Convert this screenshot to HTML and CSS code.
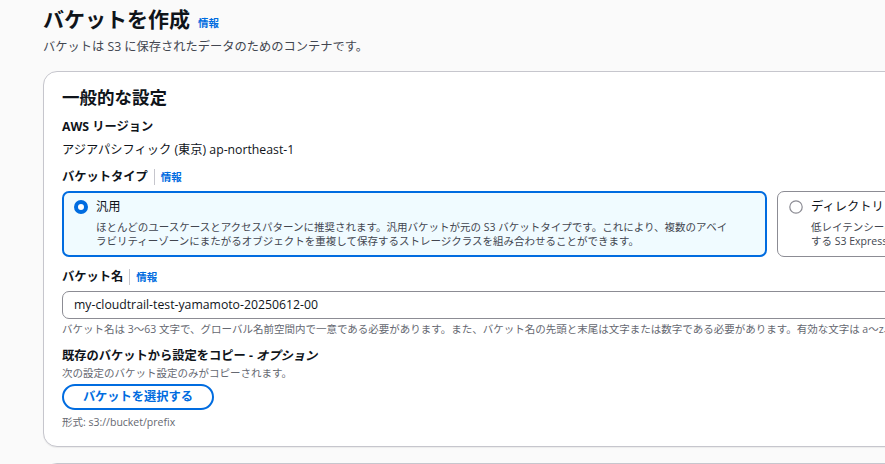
FILE: index.html
```html
<!DOCTYPE html>
<html lang="ja">
<head>
<meta charset="utf-8">
<title>バケットを作成</title>
<link rel="stylesheet" href="styles.css">
</head>
<body>
<div class="page">
  <div class="page-header">
    <h1 class="title">バケットを作成</h1>
    <a class="info-link title-info">情報</a>
  </div>
  <p class="page-desc">バケットは S3 に保存されたデータのためのコンテナです。</p>

  <section class="container">
    <h2 class="container-title">一般的な設定</h2>

    <div class="field field-first">
      <div class="label">AWS リージョン</div>
      <div class="value">アジアパシフィック (東京) ap-northeast-1</div>
    </div>

    <div class="field">
      <div class="label-row">
        <span class="label">バケットタイプ</span>
        <span class="divider"></span>
        <a class="info-link">情報</a>
      </div>
      <div class="tiles">
        <div class="tile tile-selected">
          <div class="tile-head">
            <svg class="radio" width="14" height="14" viewBox="0 0 14 14"><circle cx="7" cy="7" r="5" fill="#ffffff" stroke="#006ce0" stroke-width="4"/></svg>
            <span class="tile-title">汎用</span>
          </div>
          <div class="tile-desc">ほとんどのユースケースとアクセスパターンに推奨されます。汎用バケットが元の S3 バケットタイプです。これにより、複数のアベイ<br>ラビリティーゾーンにまたがるオブジェクトを重複して保存するストレージクラスを組み合わせることができます。</div>
        </div>
        <div class="tile">
          <div class="tile-head">
            <svg class="radio" width="14" height="14" viewBox="0 0 14 14"><circle cx="7" cy="7" r="6.2" fill="#ffffff" stroke="#8c8c94" stroke-width="1.2"/></svg>
            <span class="tile-title">ディレクトリ</span>
          </div>
          <div class="tile-desc">低レイテンシーのユースケースに推奨されます。これらのバケットは、単一のアベイラビリティーゾーン内でより高速なデータ処理を提供<br>する S3 Express One Zone ストレージクラスのみを使用します。</div>
        </div>
      </div>
    </div>

    <div class="field field-name">
      <div class="label-row">
        <span class="label">バケット名</span>
        <span class="divider"></span>
        <a class="info-link">情報</a>
      </div>
      <div class="input">my-cloudtrail-test-yamamoto-20250612-00</div>
      <div class="hint">バケット名は 3～63 文字で、グローバル名前空間内で一意である必要があります。また、バケット名の先頭と末尾は文字または数字である必要があります。有効な文字は a～z、0～9、ピリオド (.)、ハイフン (-) です。</div>
    </div>

    <div class="field field-copy">
      <div class="label">既存のバケットから設定をコピー - <em class="optional">オプション</em></div>
      <div class="hint hint-desc">次の設定のバケット設定のみがコピーされます。</div>
      <button class="btn">バケットを選択する</button>
      <div class="hint hint-format">形式: s3://bucket/prefix</div>
    </div>
  </section>

  <section class="container container-next">
    <h2 class="container-title">オブジェクト所有者</h2>
  </section>
</div>
</body>
</html>
```

FILE: styles.css
```css
html, body {
  margin: 0;
  padding: 0;
  overflow: hidden;
  background: #fafafa;
}

body {
  font-family: "Open Sans", "Noto Sans CJK JP", sans-serif;
  color: #0f141a;
  font-size: 12.25px;
  line-height: 17.5px;
}

.page {
  padding: 6px 0 0 43px;
  width: 1500px;
}

.page-header {
  display: flex;
  align-items: baseline;
  gap: 8px;
}

.title {
  margin: 0;
  font-size: 21px;
  line-height: 26px;
  font-weight: 700;
  color: #0f141a;
}

.info-link {
  color: #006ce0;
  font-size: 10.5px;
  line-height: 14px;
  font-weight: 700;
  text-decoration: none;
}

.page-desc {
  margin: 6px 0 0;
  color: #424650;
  font-size: 12.25px;
  line-height: 17.5px;
}

.container {
  margin-top: 15px;
  background: #ffffff;
  border: 1px solid #c6c6cd;
  border-radius: 14px;
  padding: 14px 18px 17px;
  width: 1420px;
  box-shadow: 0 1px 1px rgba(0, 0, 0, 0.06);
}

.container-next {
  margin-top: 16px;
}

.container-title {
  margin: 0;
  font-size: 17.5px;
  line-height: 22px;
  font-weight: 700;
}

.field-first {
  margin-top: 10px;
}

.field {
  display: flex;
  flex-direction: column;
}

.label {
  font-weight: 700;
  font-size: 12.25px;
  line-height: 17.5px;
}

.optional {
  font-style: italic;
  font-weight: 700;
}

.value {
  margin-top: 5.5px;
}

.label-row {
  margin-top: 10px;
  display: flex;
  align-items: center;
  gap: 6px;
}

.divider {
  width: 1px;
  height: 16px;
  background: #c6c6cd;
}

.tiles {
  margin-top: 5.5px;
  display: grid;
  grid-template-columns: 705px 705px;
  gap: 10px;
}

.tile {
  border: 1px solid #8c8c94;
  border-radius: 7px;
  padding: 6px 11px 8px;
  background: #ffffff;
  height: 66px;
  box-sizing: border-box;
}

.tile-selected {
  border: 2px solid #006ce0;
  background: #f0fbff;
  padding: 5px 10px 7px;
}

.tile-head {
  display: flex;
  align-items: center;
  gap: 8px;
}

.radio {
  flex: none;
}

.tile-title {
  font-size: 12.25px;
  line-height: 17.5px;
}

.tile-desc {
  margin-top: 4px;
  padding-left: 22px;
  font-size: 10.5px;
  line-height: 14px;
  color: #424650;
  white-space: nowrap;
}

.field-name .label-row {
  margin-top: 11px;
}

.input {
  margin-top: 5.5px;
  height: 28px;
  box-sizing: border-box;
  border: 1px solid #8c8c94;
  border-radius: 7px;
  padding: 0 11px;
  display: flex;
  align-items: center;
  background: #ffffff;
  font-size: 12.25px;
}

.hint {
  margin-top: 2.5px;
  font-size: 10.5px;
  line-height: 14px;
  color: #656871;
  white-space: nowrap;
}

.field-copy {
  margin-top: 11px;
}

.field-copy .hint-desc {
  margin-top: 1.5px;
}

.btn {
  margin-top: 4px;
  align-self: flex-start;
  font-family: inherit;
  font-size: 12.25px;
  line-height: 18.5px;
  font-weight: 700;
  color: #006ce0;
  background: #ffffff;
  border: 2px solid #006ce0;
  border-radius: 20px;
  padding: 2px 0;
  width: 152px;
  white-space: nowrap;
  text-align: center;
}

.hint-format {
  margin-top: 4.5px;
}
```
